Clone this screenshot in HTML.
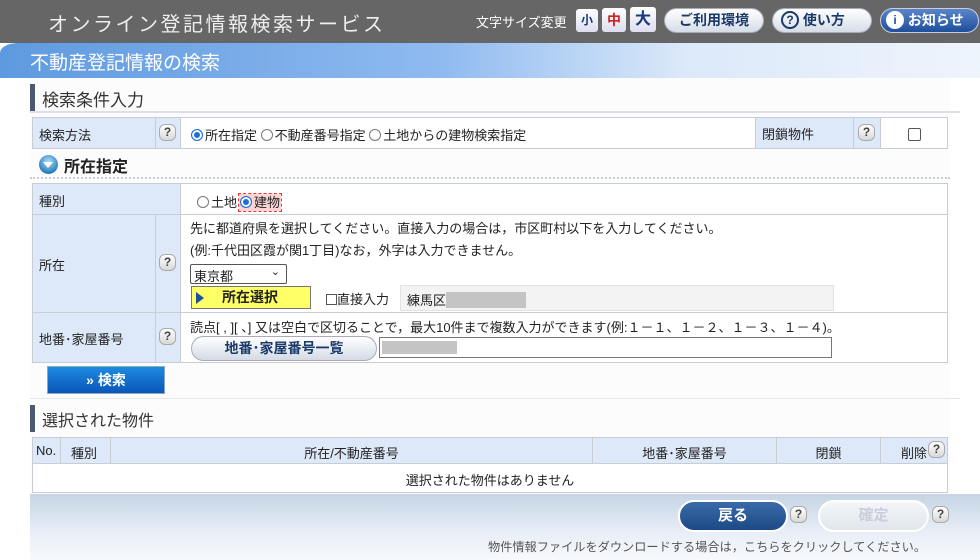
<!DOCTYPE html>
<html><head><meta charset="utf-8">
<style>
*{box-sizing:border-box;margin:0;padding:0}
body{width:980px;height:560px;overflow:hidden;background:#fff;font-family:"Liberation Sans","Noto Sans CJK JP",sans-serif;font-size:13px;color:#222;position:relative}
.a{position:absolute}
.hdr{left:0;top:0;width:980px;height:43px;background:#666}
.band{left:0;top:43px;width:980px;height:35px;background:linear-gradient(90deg,#5e9ae0 0%,#8fbaf0 45%,#dce9f9 70%,#eef4fc 100%);border-top-left-radius:18px 10px}
.q{display:inline-block;width:17px;height:17px;border:1px solid #aaa;border-radius:6px;background:linear-gradient(#fff,#d8d8d8);font-size:12px;line-height:15px;text-align:center;color:#444;font-weight:bold}
.lbl{background:#dde8f8}
.cell{position:absolute;border:1px solid #c8ccd4;white-space:nowrap}
.pill{position:absolute;border-radius:14px;text-align:center;font-weight:bold}
.rad{display:inline-block;width:12px;height:12px;border:1px solid #777;border-radius:50%;vertical-align:-1px;margin-right:2px;background:#fff}
.rad.on{border-color:#1a6fd8;box-shadow:inset 0 0 0 2px #fff;background:#1a6fd8}
</style></head><body>
<div class="a hdr"></div>
<div class="a" style="left:48px;top:8px;color:#eee;font-size:20px;letter-spacing:2.5px">オンライン登記情報検索サービス</div>
<div class="a" style="left:476px;top:12px;color:#fff;font-size:13px">文字サイズ変更</div>
<div class="a" style="left:576px;top:9px;width:22px;height:23px;background:linear-gradient(#fff,#dde);border-radius:3px;color:#1a3a7a;font-weight:bold;text-align:center;line-height:23px;font-size:12px">小</div>
<div class="a" style="left:602px;top:8px;width:24px;height:24px;background:linear-gradient(#fff,#dde);border-radius:3px;color:#c22;font-weight:bold;text-align:center;line-height:24px;font-size:14px">中</div>
<div class="a" style="left:630px;top:7px;width:26px;height:25px;background:linear-gradient(#fff,#dde);border-radius:3px;color:#1a3a7a;font-weight:bold;text-align:center;line-height:25px;font-size:16px">大</div>
<div class="pill" style="left:664px;top:8px;width:100px;height:25px;background:linear-gradient(#fff,#d6dde8);border:1px solid #aab;color:#1a3a6a;line-height:23px;font-size:14px">ご利用環境</div>
<div class="pill" style="left:772px;top:8px;width:100px;height:25px;background:linear-gradient(#fff,#d6dde8);border:1px solid #aab;color:#1a3a6a;line-height:23px;font-size:14px;text-align:left;padding-left:8px"><span style="display:inline-block;width:18px;height:18px;border:2px solid #1a3a6a;border-radius:50%;font-size:12px;line-height:14px;text-align:center;vertical-align:1px">?</span> 使い方</div>
<div class="pill" style="left:880px;top:8px;width:99px;height:25px;background:linear-gradient(#5a86c8,#1d4f9e);border:1px solid #ccd;color:#fff;line-height:23px;font-size:14px;text-align:left;padding-left:5px"><span style="display:inline-block;width:18px;height:18px;background:#fff;color:#1d4f9e;border-radius:50%;font-size:12px;line-height:18px;text-align:center;vertical-align:1px">i</span> お知らせ</div>
<div class="a band"></div>
<div class="a" style="left:30px;top:48px;color:#fff;font-size:19px">不動産登記情報の検索</div>

<div class="a" style="left:30px;top:78px;width:920px;height:416px;background:#fcfcfd"></div>
<div class="a" style="left:30px;top:84px;width:5px;height:27px;background:#4a5a70"></div>
<div class="a" style="left:42px;top:86px;font-size:17px;color:#333">検索条件入力</div>
<div class="a" style="left:30px;top:111px;width:930px;height:2px;background:#dde"></div>

<div class="cell lbl" style="left:32px;top:117px;width:124px;height:32px;padding:7px 6px">検索方法</div>
<div class="cell lbl" style="left:155px;top:117px;width:26px;height:32px;padding:6px 3px"><span class="q">?</span></div>
<div class="cell" style="left:180px;top:117px;width:576px;height:32px;padding:7px 10px;background:#fff"><span class="rad on"></span>所在指定 <span class="rad"></span>不動産番号指定 <span class="rad"></span>土地からの建物検索指定</div>
<div class="cell lbl" style="left:755px;top:117px;width:99px;height:32px;padding:6px 6px">閉鎖物件</div>
<div class="cell lbl" style="left:853px;top:117px;width:28px;height:32px;padding:6px 4px"><span class="q">?</span></div>
<div class="cell" style="left:880px;top:117px;width:68px;height:32px;background:#fff"><span class="a" style="left:27px;top:10px;width:13px;height:13px;border:1px solid #555;border-radius:2px"></span></div>

<div class="a" style="left:39px;top:155px;width:19px;height:19px;border-radius:50%;background:radial-gradient(circle at 50% 35%,#aee0f5,#2a7fc0 70%,#1b5a90)"><div class="a" style="left:4px;top:7px;border-left:5.5px solid transparent;border-right:5.5px solid transparent;border-top:6px solid #fff"></div></div>
<div class="a" style="left:64px;top:153px;font-size:16px;font-weight:bold;color:#222">所在指定</div>
<div class="a" style="left:30px;top:177px;width:920px;border-top:2px dotted #c8ccd4"></div>

<div class="cell lbl" style="left:32px;top:183px;width:149px;height:32px;padding:7px 6px">種別</div>
<div class="cell" style="left:180px;top:183px;width:768px;height:32px;background:#fff;padding:8px 16px"><span class="rad"></span>土地<span style="outline:1px dashed #e33;background:#fbd4d4;padding:1px 1px;margin-left:2px"><span class="rad on"></span>建物</span></div>
<div class="cell lbl" style="left:32px;top:214px;width:124px;height:99px;padding:40px 6px">所在</div>
<div class="cell lbl" style="left:155px;top:214px;width:26px;height:99px;padding:39px 3px"><span class="q">?</span></div>
<div class="cell" style="left:180px;top:214px;width:768px;height:99px;background:#fff"></div>
<div class="a" style="left:190px;top:218px">先に都道府県を選択してください。直接入力の場合は，市区町村以下を入力してください。</div>
<div class="a" style="left:190px;top:240px">(例:千代田区霞が関1丁目)なお，外字は入力できません。</div>
<div class="a" style="left:190px;top:264px;width:97px;height:20px;border:1px solid #555;border-radius:2px;padding:1px 3px;background:#fff">東京都<span class="a" style="right:6px;top:0;font-size:11px">⌄</span></div>
<div class="a" style="left:191px;top:286px;width:120px;height:23px;background:#ffff66;border:1px solid #777;font-weight:bold;font-size:14px;line-height:21px;padding-left:30px"><span class="a" style="left:4px;top:5px;border-top:6px solid transparent;border-bottom:6px solid transparent;border-left:8px solid #1d4f9e"></span>所在選択</div>
<div class="a" style="left:326px;top:289px"><span style="display:inline-block;width:11px;height:11px;border:1px solid #555;vertical-align:-1px"></span>直接入力</div>
<div class="a" style="left:400px;top:285px;width:434px;height:26px;background:#f3f3f3;border:1px solid #e2e2e2;padding:4px 6px">練馬区<span style="display:inline-block;width:80px;height:16px;background:#c4c4c4;vertical-align:-3px"></span></div>

<div class="cell lbl" style="left:32px;top:312px;width:124px;height:51px;padding:16px 6px">地番･家屋番号</div>
<div class="cell lbl" style="left:155px;top:312px;width:26px;height:51px;padding:15px 3px"><span class="q">?</span></div>
<div class="cell" style="left:180px;top:312px;width:768px;height:51px;background:#fff"></div>
<div class="a" style="left:190px;top:317px">読点[ , ][ 、] 又は空白で区切ることで，最大10件まで複数入力ができます(例:１－１、１－２、１－３、１－４)。</div>
<div class="pill" style="left:191px;top:336px;width:186px;height:25px;background:linear-gradient(#fff,#d4dbe6);border:1px solid #aab;color:#1a3a6a;line-height:23px;font-size:14px;border-radius:13px">地番･家屋番号一覧</div>
<div class="a" style="left:379px;top:337px;width:453px;height:21px;border:1px solid #777;background:#fff;padding:3px 2px"><div style="width:75px;height:13px;background:#c4c4c4"></div></div>

<div class="a" style="left:47px;top:366px;width:118px;height:28px;background:linear-gradient(#1d8ae0,#0a56b8);border:1px solid #8ab;color:#fff;font-weight:bold;text-align:center;line-height:26px;font-size:14px">» 検索</div>
<div class="a" style="left:30px;top:398px;width:930px;height:1px;background:#e4e6ea"></div>

<div class="a" style="left:30px;top:405px;width:5px;height:27px;background:#4a5a70"></div>
<div class="a" style="left:42px;top:407px;font-size:16px;color:#333">選択された物件</div>

<div class="cell lbl" style="left:32px;top:437px;width:29px;height:27px;padding:5px 3px">No.</div>
<div class="cell lbl" style="left:60px;top:437px;width:51px;height:27px;padding:5px 10px">種別</div>
<div class="cell lbl" style="left:110px;top:437px;width:483px;height:27px;padding:5px;text-align:center">所在/不動産番号</div>
<div class="cell lbl" style="left:592px;top:437px;width:185px;height:27px;padding:5px;text-align:center">地番･家屋番号</div>
<div class="cell lbl" style="left:776px;top:437px;width:105px;height:27px;padding:5px;text-align:center">閉鎖</div>
<div class="cell lbl" style="left:880px;top:437px;width:68px;height:27px;padding:5px 20px 5px 1px;text-align:right">削除</div>
<span class="q a" style="left:928px;top:441px">?</span>
<div class="cell" style="left:32px;top:463px;width:916px;height:30px;background:#fff;text-align:center;padding:6px">選択された物件はありません</div>

<div class="a" style="left:30px;top:494px;width:950px;height:66px;background:linear-gradient(#c6d4e4,#e9eff7 60%,#f7f9fc)"></div>
<div class="pill" style="left:678px;top:500px;width:110px;height:32px;border-radius:16px;background:linear-gradient(#3a6aa8,#1c4a86);border:2px solid #fff;color:#fff;font-size:15px;line-height:28px">戻る</div>
<div class="a" style="left:790px;top:506px"><span class="q">?</span></div>
<div class="pill" style="left:818px;top:500px;width:111px;height:32px;border-radius:16px;background:linear-gradient(#f4f6f8,#e0e6ec);border:2px solid #fff;color:#ccd;font-size:15px;line-height:28px">確定</div>
<div class="a" style="left:932px;top:506px"><span class="q">?</span></div>
<div class="a" style="left:488px;top:537px;color:#555;font-size:12.2px;white-space:nowrap">物件情報ファイルをダウンロードする場合は，こちらをクリックしてください。</div>
</body></html>
